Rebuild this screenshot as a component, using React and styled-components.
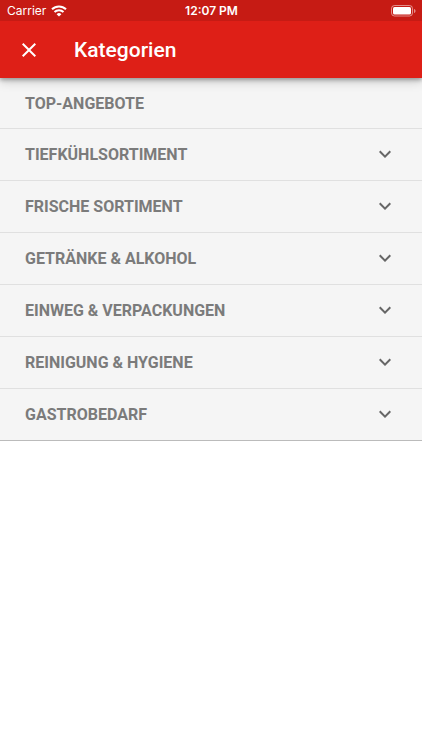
import { useState } from "react";
import styled, { createGlobalStyle } from "styled-components";

const categories = [
  { name: "TOP-ANGEBOTE", expandable: false },
  { name: "TIEFKÜHLSORTIMENT", expandable: true },
  { name: "FRISCHE SORTIMENT", expandable: true },
  { name: "GETRÄNKE & ALKOHOL", expandable: true },
  { name: "EINWEG & VERPACKUNGEN", expandable: true },
  { name: "REINIGUNG & HYGIENE", expandable: true },
  { name: "GASTROBEDARF", expandable: true },
];

function WifiIcon() {
  return (
    <svg width="16" height="12" viewBox="0 0 16 12" fill="none" stroke="#fff" aria-hidden="true">
      <path d="M1 4.300a10 10 0 0 1 14 0" strokeWidth="2" />
      <path d="M3.500 7a6.400 6.400 0 0 1 9 0" strokeWidth="2" />
      <path d="M8 11.600 5.600 9.200a3.400 3.400 0 0 1 4.800 0z" fill="#fff" stroke="none" />
    </svg>
  );
}

function BatteryIcon() {
  return (
    <svg width="25" height="12" viewBox="0 0 25 12" aria-hidden="true">
      <rect x="0.5" y="0.5" width="21" height="10.5" rx="3" fill="none" stroke="#fff" strokeOpacity="0.5" />
      <rect x="2" y="2" width="18" height="7.5" rx="1.5" fill="#fff" />
      <path d="M23 4v4c1-.4 1.500-1.100 1.500-2S24 4.400 23 4z" fill="#fff" fillOpacity="0.5" />
    </svg>
  );
}

function CloseIcon() {
  return (
    <svg width="24" height="24" viewBox="0 0 24 24" fill="#fff" aria-hidden="true">
      <path d="M19 6.400 17.600 5 12 10.600 6.400 5 5 6.400 10.600 12 5 17.600 6.400 19 12 13.400 17.600 19 19 17.600 13.400 12z" />
    </svg>
  );
}

function ChevronIcon() {
  return (
    <svg width="24" height="24" viewBox="0 0 24 24" fill="#666" aria-hidden="true">
      <path d="M7.400 7.600 12 12.200l4.600-4.600L18 9l-6 6-6-6z" />
    </svg>
  );
}

function Category({ name, expandable }) {
  const [open, setOpen] = useState(false);

  return (
    <Item>
      <CategoryButton
        type="button"
        aria-expanded={expandable ? open : undefined}
        onClick={() => setOpen(!open)}
      >
        {name}
        {expandable && (
          <Arrow $open={open}>
            <ChevronIcon />
          </Arrow>
        )}
      </CategoryButton>
    </Item>
  );
}

function App() {
  return (
    <>
      <GlobalStyle />
      <Header>
        <StatusBar>
          <Carrier>
            Carrier
            <WifiIcon />
          </Carrier>
          <Time>12:07 PM</Time>
          <Battery>
            <BatteryIcon />
          </Battery>
        </StatusBar>
        <Toolbar>
          <CloseButton type="button" aria-label="Schließen">
            <CloseIcon />
          </CloseButton>
          <Title>Kategorien</Title>
        </Toolbar>
      </Header>
      <List>
        {categories.map((category) => (
          <Category key={category.name} {...category} />
        ))}
      </List>
    </>
  );
}

export default App;

const GlobalStyle = createGlobalStyle`
  * {
    box-sizing: border-box;
  }

  body {
    margin: 0;
    background-color: #fff;
    font-family: Roboto, "Liberation Sans", sans-serif;
  }
`;

const Header = styled.header`
  position: relative;
  z-index: 1;
  background-color: #de1f17;
  color: #fff;
  box-shadow: 0 2px 4px rgba(0, 0, 0, 0.3), 0 4px 10px rgba(0, 0, 0, 0.16);
`;

const StatusBar = styled.div`
  display: grid;
  grid-template-columns: 1fr auto 1fr;
  align-items: center;
  height: 21px;
  padding: 0 6px 0 7px;
  background-color: #c61b14;
  font-family: Inter, "Liberation Sans", sans-serif;
  font-size: 12px;
  line-height: 20px;
`;

const Carrier = styled.span`
  display: flex;
  align-items: center;
  gap: 5px;
`;

const Time = styled.span`
  font-weight: 600;
`;

const Battery = styled.span`
  display: flex;
  justify-content: flex-end;
`;

const Toolbar = styled.div`
  display: flex;
  align-items: center;
  gap: 24px;
  height: 57px;
  padding: 0 8px;
`;

const CloseButton = styled.button`
  display: flex;
  align-items: center;
  justify-content: center;
  width: 42px;
  height: 42px;
  padding: 0;
  border: none;
  border-radius: 50%;
  background: none;
  cursor: pointer;
`;

const Title = styled.h1`
  margin: 0;
  font-size: 21px;
  font-weight: 500;
  line-height: 28px;
`;

const List = styled.ul`
  margin: 0;
  padding: 0;
  list-style: none;
  background-color: #f5f5f5;
  box-shadow: 0 1px 2px rgba(0, 0, 0, 0.4);
`;

const CategoryButton = styled.button`
  display: flex;
  align-items: center;
  justify-content: space-between;
  width: 100%;
  height: 51px;
  padding: 0 25px;
  border: none;
  background: none;
  color: #7b7b7b;
  font-family: inherit;
  font-size: 16px;
  font-weight: 700;
  text-align: left;
  cursor: pointer;
`;

const Item = styled.li`
  border-bottom: 1px solid #e0e0e0;

  &:first-child ${CategoryButton} {
    height: 50px;
  }

  &:last-child {
    border-bottom-color: #bbb;
  }
`;

const Arrow = styled.span`
  display: flex;
  transform: ${({ $open }) => ($open ? "rotate(180deg)" : "none")};
`;
